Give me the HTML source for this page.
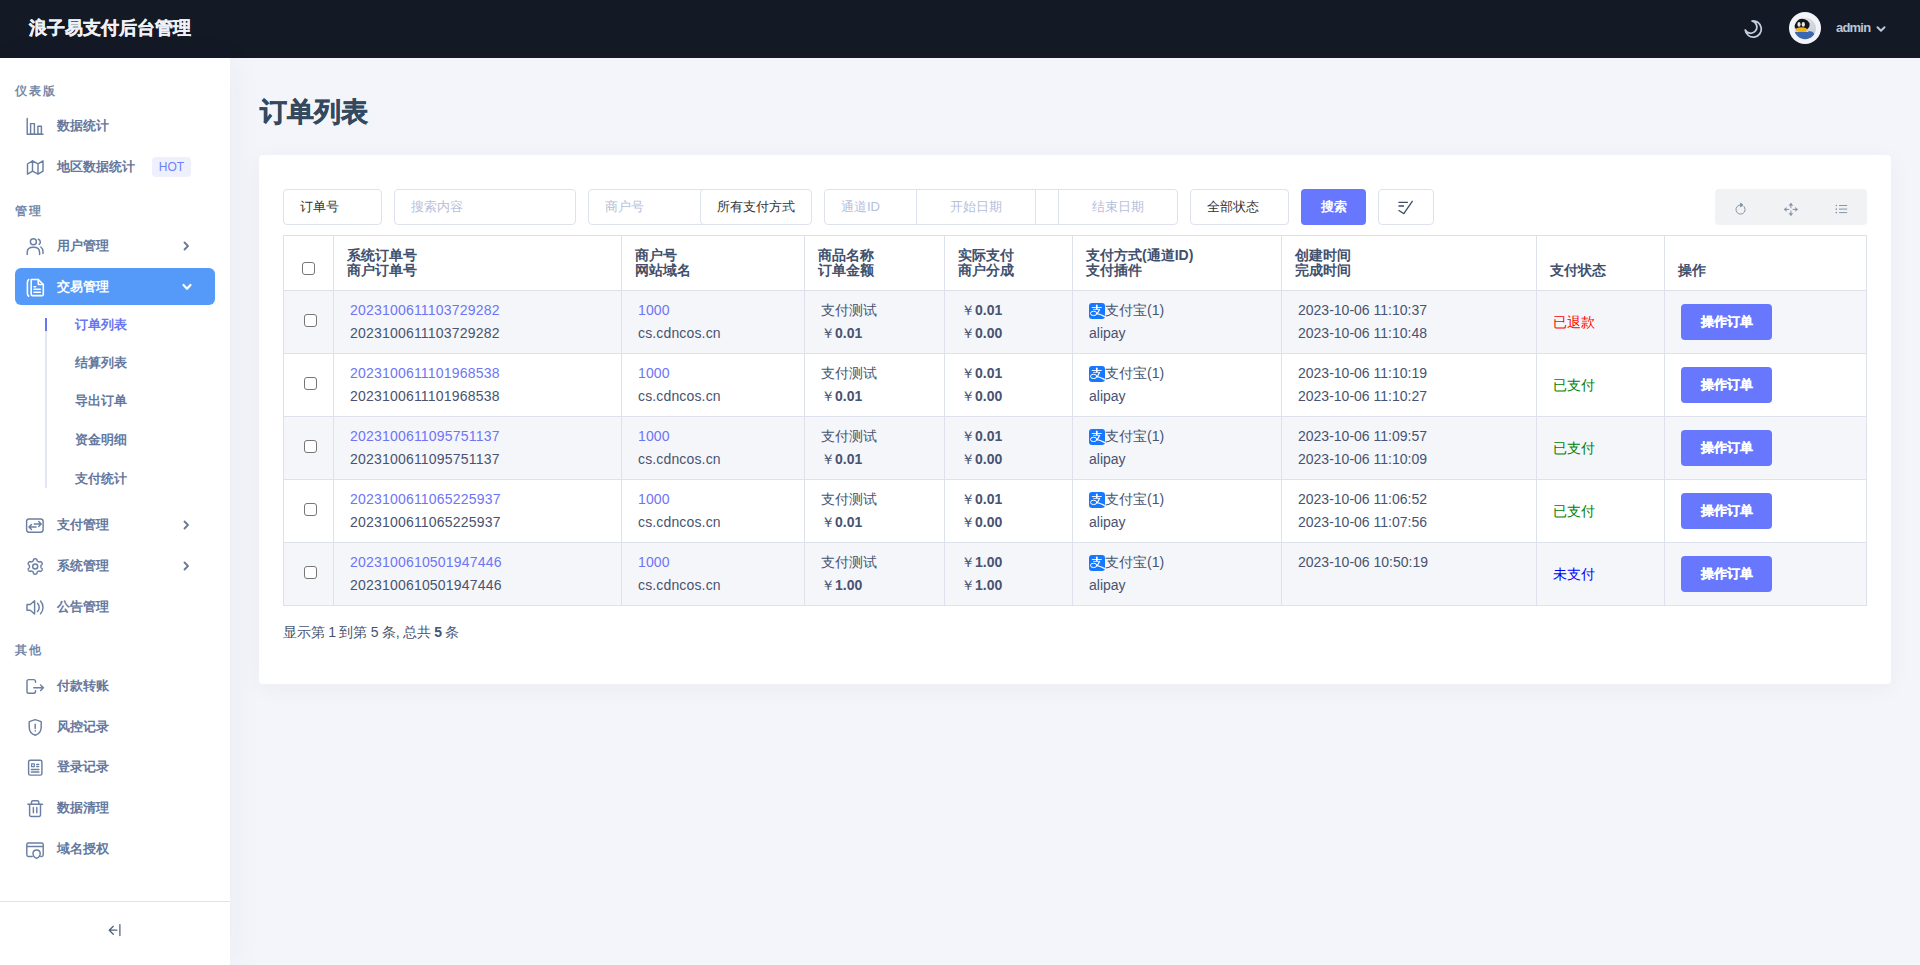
<!DOCTYPE html>
<html><head><meta charset="utf-8">
<style>
*{box-sizing:border-box;margin:0;padding:0}
html,body{width:1920px;height:965px;overflow:hidden;background:#f4f5fa;font-family:"Liberation Sans",sans-serif;}
#hdr{position:absolute;left:0;top:0;width:1920px;height:58px;background:#131925}
#hdr .title{position:absolute;left:29px;top:16px;font-size:18px;font-weight:bold;color:#eef1f7;line-height:24px;white-space:nowrap;-webkit-text-stroke:0.35px #eef1f7}
#side{position:absolute;left:0;top:58px;width:230px;height:907px;background:#fff;box-shadow:4px 0 30px rgba(30,40,90,0.045)}
.sec{position:absolute;left:15px;font-size:12px;font-weight:bold;color:#7488a8;letter-spacing:2px;line-height:14px;height:14px;white-space:nowrap}
.mi{position:absolute;left:15px;width:200px;height:36px;color:#64789e;font-size:13px;font-weight:bold;line-height:36px;white-space:nowrap}
.mi .tx{position:absolute;left:42px;top:1px}
.mi svg.ic{position:absolute;left:10px;top:9px;width:18px;height:18px}
.mi svg.chev{position:absolute;left:166px;top:14px;width:10px;height:10px}
.mi.act{background:#569af9;color:#fff;border-radius:6px;height:37px}
.hot{position:absolute;left:137px;top:9px;width:39px;height:20px;background:#eef0fd;color:#6f7ffb;border-radius:4px;font-size:12px;font-weight:normal;line-height:21px;text-align:center}
.sub{position:absolute;left:75px;font-size:13px;font-weight:bold;color:#64789e;line-height:16px;height:16px;white-space:nowrap}
.sub.on{color:#6777ef}
#ptitle{position:absolute;left:260px;top:94px;font-size:27px;font-weight:bold;color:#34495e;line-height:36px;white-space:nowrap;-webkit-text-stroke:0.5px #34495e}
#card{position:absolute;left:259px;top:155px;width:1632px;height:529px;background:#fff;border-radius:4px;box-shadow:0 4px 24px rgba(30,40,90,0.045)}
.inp{position:absolute;top:189px;height:36px;border:1px solid #dde2ee;border-radius:4px;background:#fff;font-size:13px;line-height:34px;padding-left:16px;color:#333;white-space:nowrap}
.ph{color:#b6c0da}
table.t{position:absolute;left:283px;top:235px;border-collapse:collapse;table-layout:fixed;font-size:14px}
table.t td,table.t th{border:1px solid #dde1ec;padding:0 0 0 13px;text-align:left;white-space:nowrap}
table.t th{height:55px;font-size:14px;font-weight:bold;color:#41506c;line-height:15px;vertical-align:bottom;padding-bottom:12px}
table.t td{height:63px;color:#475370;line-height:23px;vertical-align:middle;padding-left:16px}
table.t tr.odd td{background:#f5f6fa}
table.t td.c0{padding:0;text-align:center;vertical-align:middle}
table.t th.c0{padding:0 0 15px 0;text-align:center;vertical-align:bottom;line-height:13px}
.lk{color:#6d75f5}
b.m{font-weight:bold}
.btn{display:inline-block;width:91px;height:36px;background:#6777fe;color:#fff;border-radius:4px;font-size:13px;font-weight:bold;text-align:center;line-height:36px;-webkit-text-stroke:0.25px #fff}
.cb{display:inline-block;width:13px;height:13px;border:1px solid #767676;border-radius:3px;background:#fff;vertical-align:middle}
td.c0 .cb{position:relative;left:2px;top:-2px}
.ali{display:inline-block;width:16px;height:16px;background:#1677ff;border-radius:3px;vertical-align:-4px;position:relative;overflow:hidden}
</style></head><body>
<div id="hdr"><div class="title">浪子易支付后台管理</div></div>
<div id="side"></div>

<div class="sec" style="top:84px">仪表版</div>
<div class="sec" style="top:204px">管理</div>
<div class="sec" style="top:643px">其他</div>
<div class="mi" style="top:107px"><span class="tx">数据统计</span></div>
<div class="mi" style="top:148px"><span class="tx">地区数据统计</span><div class="hot">HOT</div></div>
<div class="mi" style="top:227px"><span class="tx">用户管理</span><svg class="chev" viewBox="0 0 10 10" fill="none" stroke="#6a7890" stroke-width="1.8" stroke-linecap="round" stroke-linejoin="round"><path d="M3.5 1.5L7 5 3.5 8.5"/></svg></div>
<div class="mi act" style="top:268px"><span class="tx">交易管理</span><svg class="chev" style="left:166px;top:13px;width:12px;height:12px" viewBox="0 0 12 12" fill="none" stroke="#fff" stroke-width="2.2" stroke-linecap="round" stroke-linejoin="round"><path d="M2.5 4L6 7.8 9.5 4"/></svg></div>
<div class="mi" style="top:506px"><span class="tx">支付管理</span><svg class="chev" viewBox="0 0 10 10" fill="none" stroke="#6a7890" stroke-width="1.8" stroke-linecap="round" stroke-linejoin="round"><path d="M3.5 1.5L7 5 3.5 8.5"/></svg></div>
<div class="mi" style="top:547px"><span class="tx">系统管理</span><svg class="chev" viewBox="0 0 10 10" fill="none" stroke="#6a7890" stroke-width="1.8" stroke-linecap="round" stroke-linejoin="round"><path d="M3.5 1.5L7 5 3.5 8.5"/></svg></div>
<div class="mi" style="top:588px"><span class="tx">公告管理</span></div>
<div class="mi" style="top:667px"><span class="tx">付款转账</span></div>
<div class="mi" style="top:708px"><span class="tx">风控记录</span></div>
<div class="mi" style="top:748px"><span class="tx">登录记录</span></div>
<div class="mi" style="top:789px"><span class="tx">数据清理</span></div>
<div class="mi" style="top:830px"><span class="tx">域名授权</span></div>
<svg style="position:absolute;left:0;top:0" width="230" height="965" viewBox="0 0 230 965" fill="none" stroke="#6b7fa2" stroke-width="1.45" stroke-linecap="round" stroke-linejoin="round">
<path d="M27.2 118.5V134.3H43"/><rect x="30.6" y="123.6" width="3.8" height="10.7"/><rect x="37.9" y="126.2" width="3.5" height="8.1"/>
<path d="M27.5 164L32.5 160.8L38 163.8L43 160.8V171.2L38 174.2L32.5 171.2L27.5 174.2Z M32.5 160.8V171.2 M38 163.8V174.2"/>
<circle cx="33.4" cy="241.8" r="3"/><path d="M27.2 254.5V252.5C27.2 249.3 29.6 247.3 33.4 247.3C37.2 247.3 39.6 249.3 39.6 252.5V254.5"/><path d="M38.3 239.2A3 3 0 0 1 39.2 244.4M40.8 247C42.3 248 43 249.8 43 252V253.5"/>
<g stroke="#fff" stroke-width="1.6"><path d="M28.6 279.6C27.7 280.4 27.4 281.3 27.4 282.5V293.2C27.4 294.4 27.7 295.3 28.6 296.1"/><path d="M31.2 279.5H38.3L43.3 284.5V294.6A1 1 0 0 1 42.3 295.6H32.2A1 1 0 0 1 31.2 294.6Z"/><path d="M38.3 279.5V284.5H43.3"/><path d="M34 286.7H35.6M34 289.3H40.3M34 292.3H40.3"/></g>
<rect x="26.6" y="518.9" width="16.5" height="13.3" rx="2.4"/><path d="M34.3 524H41.2M38.7 521.5L41.2 524L38.7 526.5M36.1 527H29M31.5 524.5L29 527L31.5 529.5"/>
<path d="M40.90 566.50 L40.90 566.65 L40.91 566.80 L40.93 566.95 L40.96 567.11 L40.99 567.26 L41.04 567.42 L41.10 567.59 L41.18 567.77 L41.29 567.96 L41.67 568.23 L42.04 568.53 L42.13 568.75 L42.18 568.97 L42.19 569.18 L42.18 569.39 L42.15 569.59 L42.10 569.79 L42.04 569.99 L41.96 570.17 L41.87 570.35 L41.76 570.52 L41.64 570.68 L41.50 570.83 L41.36 570.97 L41.19 571.10 L41.02 571.21 L40.83 571.31 L40.62 571.38 L40.37 571.41 L39.94 571.24 L39.51 571.05 L39.29 571.04 L39.10 571.06 L38.92 571.10 L38.76 571.14 L38.60 571.18 L38.46 571.24 L38.32 571.30 L38.18 571.36 L38.05 571.44 L37.92 571.51 L37.80 571.60 L37.68 571.69 L37.56 571.79 L37.44 571.90 L37.32 572.02 L37.20 572.15 L37.09 572.31 L36.98 572.51 L36.93 572.97 L36.87 573.44 L36.72 573.63 L36.55 573.78 L36.37 573.90 L36.19 573.99 L36.00 574.07 L35.80 574.13 L35.60 574.17 L35.40 574.19 L35.20 574.20 L35.00 574.19 L34.80 574.17 L34.60 574.13 L34.40 574.07 L34.21 573.99 L34.03 573.90 L33.85 573.78 L33.68 573.63 L33.53 573.44 L33.47 572.97 L33.42 572.51 L33.31 572.31 L33.20 572.15 L33.08 572.02 L32.96 571.90 L32.84 571.79 L32.72 571.69 L32.60 571.60 L32.48 571.51 L32.35 571.44 L32.22 571.36 L32.08 571.30 L31.94 571.24 L31.80 571.18 L31.64 571.14 L31.48 571.10 L31.30 571.06 L31.11 571.04 L30.89 571.05 L30.46 571.24 L30.03 571.41 L29.78 571.38 L29.57 571.31 L29.38 571.21 L29.21 571.10 L29.04 570.97 L28.90 570.83 L28.76 570.68 L28.64 570.52 L28.53 570.35 L28.44 570.17 L28.36 569.99 L28.30 569.79 L28.25 569.59 L28.22 569.39 L28.21 569.18 L28.22 568.97 L28.27 568.75 L28.36 568.53 L28.73 568.23 L29.11 567.96 L29.22 567.77 L29.30 567.59 L29.36 567.42 L29.41 567.26 L29.44 567.11 L29.47 566.95 L29.49 566.80 L29.50 566.65 L29.50 566.50 L29.50 566.35 L29.49 566.20 L29.47 566.05 L29.44 565.89 L29.41 565.74 L29.36 565.58 L29.30 565.41 L29.22 565.23 L29.11 565.04 L28.73 564.77 L28.36 564.47 L28.27 564.25 L28.22 564.03 L28.21 563.82 L28.22 563.61 L28.25 563.41 L28.30 563.21 L28.36 563.01 L28.44 562.83 L28.53 562.65 L28.64 562.48 L28.76 562.32 L28.90 562.17 L29.04 562.03 L29.21 561.90 L29.38 561.79 L29.57 561.69 L29.78 561.62 L30.03 561.59 L30.46 561.76 L30.89 561.95 L31.11 561.96 L31.30 561.94 L31.48 561.90 L31.64 561.86 L31.80 561.82 L31.94 561.76 L32.08 561.70 L32.22 561.64 L32.35 561.56 L32.48 561.49 L32.60 561.40 L32.72 561.31 L32.84 561.21 L32.96 561.10 L33.08 560.98 L33.20 560.85 L33.31 560.69 L33.42 560.49 L33.47 560.03 L33.53 559.56 L33.68 559.37 L33.85 559.22 L34.03 559.10 L34.21 559.01 L34.40 558.93 L34.60 558.87 L34.80 558.83 L35.00 558.81 L35.20 558.80 L35.40 558.81 L35.60 558.83 L35.80 558.87 L36.00 558.93 L36.19 559.01 L36.37 559.10 L36.55 559.22 L36.72 559.37 L36.87 559.56 L36.93 560.03 L36.98 560.49 L37.09 560.69 L37.20 560.85 L37.32 560.98 L37.44 561.10 L37.56 561.21 L37.68 561.31 L37.80 561.40 L37.92 561.49 L38.05 561.56 L38.18 561.64 L38.32 561.70 L38.46 561.76 L38.60 561.82 L38.76 561.86 L38.92 561.90 L39.10 561.94 L39.29 561.96 L39.51 561.95 L39.94 561.76 L40.37 561.59 L40.62 561.62 L40.83 561.69 L41.02 561.79 L41.19 561.90 L41.36 562.03 L41.50 562.17 L41.64 562.32 L41.76 562.48 L41.87 562.65 L41.96 562.83 L42.04 563.01 L42.10 563.21 L42.15 563.41 L42.18 563.61 L42.19 563.82 L42.18 564.03 L42.13 564.25 L42.04 564.47 L41.67 564.77 L41.29 565.04 L41.18 565.23 L41.10 565.41 L41.04 565.58 L40.99 565.74 L40.96 565.89 L40.93 566.05 L40.91 566.20 L40.90 566.35 L40.90 566.50Z"/><circle cx="35.2" cy="566.5" r="2.5"/>
<path d="M27 604.5H30.2L34.6 600.8V614L30.2 610.3H27Z"/><path d="M37.5 603.3C38.6 604.5 39.2 605.8 39.2 607.4C39.2 609 38.6 610.3 37.5 611.5M40.5 601C42.2 602.8 43 605 43 607.4C43 609.8 42.2 612 40.5 613.8"/>
<path d="M35.5 682.2V681.4A1.8 1.8 0 0 0 33.7 679.6H28.8A1.8 1.8 0 0 0 27 681.4V691.4A1.8 1.8 0 0 0 28.8 693.2H33.7A1.8 1.8 0 0 0 35.5 691.4V690.6"/><path d="M33.8 687.8H43.4M40.6 685L43.4 687.8L40.6 690.6"/>
<path d="M35.2 719.6L41.2 721.6V727.2C41.2 731 38.6 734 35.2 735.2C31.8 734 29.2 731 29.2 727.2V721.6Z"/><path d="M35.2 724.2V728.6M35.2 730.8V730.9"/>
<rect x="28.6" y="760.3" width="13.3" height="14.8" rx="1.6"/><rect x="31.6" y="763.8" width="2.7" height="2.9" stroke-width="1.2"/><path d="M36.6 764.4H38.7M36.6 766.6H38.7M31.4 769.5H38.9M31.4 772H38.9"/>
<path d="M27.9 804.3H42.5M31.5 804.3V802.2A1.5 1.5 0 0 1 33 800.7H37.3A1.5 1.5 0 0 1 38.8 802.2V804.3M29.6 804.3V815A1.5 1.5 0 0 0 31.1 816.5H39A1.5 1.5 0 0 0 40.5 815V804.3M33.4 807.5V812.8M36.8 807.5V812.8"/>
<path d="M32.2 856.4H28.4A1.6 1.6 0 0 1 26.8 854.8V844.6A1.6 1.6 0 0 1 28.4 843H41.6A1.6 1.6 0 0 1 43.2 844.6V854.8A1.6 1.6 0 0 1 41.6 856.4H40.8M26.8 846.4H43.2"/><path d="M36.6 850A3.6 3.6 0 0 1 40.2 853.4C40.2 855.6 38.6 857.4 36.6 858.4C34.6 857.4 33 855.6 33 853.4A3.6 3.6 0 0 1 36.6 850Z"/>
</svg>
<div style="position:absolute;left:45px;top:318px;width:2px;height:170px;background:#e3e7f3"></div>
<div style="position:absolute;left:45px;top:318px;width:2px;height:13px;background:#6777ef"></div>
<div class="sub on" style="top:316.5px">订单列表</div>
<div class="sub" style="top:354.5px">结算列表</div>
<div class="sub" style="top:393px">导出订单</div>
<div class="sub" style="top:432px">资金明细</div>
<div class="sub" style="top:471px">支付统计</div>
<div style="position:absolute;left:0;top:901px;width:230px;height:1px;background:#dfe2f0"></div>
<svg style="position:absolute;left:107px;top:923px" width="15" height="14" viewBox="0 0 15 14" fill="none" stroke="#4f5f82" stroke-width="1.25" stroke-linecap="round" stroke-linejoin="round"><path d="M2.2 7.2H9.8M6.3 3.3L2.2 7.2L6.3 11.3M12.9 1.5V12.6"/></svg>
<svg style="position:absolute;left:1736px;top:12px" width="34" height="34" viewBox="1736 12 34 34" fill="none" stroke="#c3cfe0" stroke-width="1.75" stroke-linecap="round" stroke-linejoin="round"><path d="M1752 21A8.1 8.1 0 1 1 1745.2 30A6.2 6.2 0 1 0 1752 21Z"/></svg>
<svg style="position:absolute;left:1789px;top:12px" width="32" height="32" viewBox="0 0 32 32">
<defs><linearGradient id="ag" x1="0" y1="0" x2="1" y2="1"><stop offset="0" stop-color="#f2f4f7"/><stop offset="1" stop-color="#b9c1cc"/></linearGradient><clipPath id="ac"><circle cx="16.1" cy="16.4" r="10.8"/></clipPath></defs>
<circle cx="16" cy="16" r="16" fill="#f3f4f9"/>
<g clip-path="url(#ac)"><rect x="0" y="0" width="32" height="32" fill="url(#ag)"/>
<path d="M4 21C8 18.6 17 18.2 23.5 19.8L27 24L25 30H4Z" fill="#3b66b0"/><path d="M7.5 19.6C10 19 15 19 19.5 19.6" stroke="#dfe8f5" stroke-width="0.9" fill="none"/>
<ellipse cx="12.8" cy="12.9" rx="7.8" ry="6.2" fill="#15161c"/>
<ellipse cx="10" cy="12.4" rx="1.6" ry="2.3" fill="#e8e8e8"/><ellipse cx="14.3" cy="12.4" rx="1.6" ry="2.3" fill="#e8e8e8"/>
<ellipse cx="12.4" cy="17.4" rx="5.9" ry="2.1" fill="#f2b414"/></g>
</svg>
<div style="position:absolute;left:1836px;top:19px;font-size:13px;font-weight:bold;color:#b9c6d8;line-height:17px;letter-spacing:-0.8px">admin</div>
<svg style="position:absolute;left:1876px;top:25px" width="10" height="8" viewBox="0 0 10 8" fill="none" stroke="#b9c6d8" stroke-width="2" stroke-linecap="round" stroke-linejoin="round"><path d="M1.5 2.2l3.5 3.5L8.5 2.2"/></svg>
<div id="ptitle">订单列表</div>
<div id="card"></div>
<div class="inp" style="left:283px;width:99px;">订单号</div>
<div class="inp ph" style="left:394px;width:182px;">搜索内容</div>
<div class="inp ph" style="left:588px;width:124px;border-radius:4px 0 0 4px;">商户号</div>
<div class="inp" style="left:700px;width:112px;">所有支付方式</div>
<div class="inp ph" style="left:824px;width:212px;border-radius:4px 0 0 4px;">通道ID</div>
<div class="inp ph" style="left:916px;width:120px;padding:0;text-align:center;border-radius:0;border-left:1px solid #dde2ee">开始日期</div>
<div class="inp" style="left:1035px;width:24px;border-radius:0;padding:0"></div>
<div class="inp ph" style="left:1058px;width:120px;padding:0;text-align:center;border-radius:0 4px 4px 0">结束日期</div>
<div class="inp" style="left:1190px;width:99px;">全部状态</div>
<div style="position:absolute;left:1301px;top:189px;width:65px;height:36px;background:#6777fe;border-radius:4px;color:#fff;font-size:13px;font-weight:bold;line-height:36px;text-align:center">搜索</div>
<div class="inp" style="left:1378px;width:56px;padding:0"><svg style="position:absolute;left:18px;top:9px" width="18" height="17" viewBox="0 0 18 17" fill="none" stroke="#3f4c66" stroke-width="1.3" stroke-linecap="butt" stroke-linejoin="miter"><path d="M1.5 3.4H10.9M1.5 7H7M1.5 11.3L6.8 14.6L15.6 1.9"/></svg></div>
<div style="position:absolute;left:1715px;top:189px;width:152px;height:36px;background:#f1f2f4;border-radius:4px"></div>
<svg style="position:absolute;left:1715px;top:189px" width="152" height="36" viewBox="1715 189 152 36" fill="none" stroke="#8190a6" stroke-width="0.95" stroke-linecap="round" stroke-linejoin="round">
<path d="M1743.9 206.3A4.6 4.6 0 1 1 1740.8 204.9"/><path d="M1740.8 203.4L1743 205L1740.8 206.6Z" fill="#8190a6"/>
<path d="M1790.9 203.6V207.8M1790.9 211V215.2M1784.6 209.4H1788.8M1793 209.4H1797.2"/>
<path d="M1789.2 205.2L1790.9 203.3L1792.6 205.2Z M1789.2 213.6L1790.9 215.5L1792.6 213.6Z M1786.1 207.7L1784.2 209.4L1786.1 211.1Z M1795.7 207.7L1797.6 209.4L1795.7 211.1Z" fill="#8190a6" stroke-width="0.5"/>
<path d="M1836.3 205.5V205.6M1836.3 209.1V209.2M1836.3 212.6V212.7" stroke-width="1.5"/><path d="M1839.4 205.5H1846.8M1839.4 209.1H1846.8M1839.4 212.6H1846.8"/>
</svg>
<table class="t"><colgroup><col style="width:50px"><col style="width:288px"><col style="width:183px"><col style="width:140px"><col style="width:128px"><col style="width:209px"><col style="width:255px"><col style="width:128px"><col style="width:202px"></colgroup>
<tr><th class="c0"><span class="cb"></span></th><th>系统订单号<br>商户订单号</th><th>商户号<br>网站域名</th><th>商品名称<br>订单金额</th><th>实际支付<br>商户分成</th><th>支付方式(通道ID)<br>支付插件</th><th>创建时间<br>完成时间</th><th>支付状态</th><th>操作</th></tr>
<tr class="odd"><td class="c0"><span class="cb"></span></td><td style="letter-spacing:0.2px"><span class="lk">2023100611103729282</span><br>2023100611103729282</td><td style="letter-spacing:0.15px"><span class="lk">1000</span><br>cs.cdncos.cn</td><td>支付测试<br>￥<b class="m">0.01</b></td><td>￥<b class="m">0.01</b><br>￥<b class="m">0.00</b></td><td><span class="ali"><svg width="16" height="16" viewBox="0 0 16 16" style="position:absolute;left:0;top:0" fill="none" stroke="#fff" stroke-linecap="round"><path d="M3.2 4.5H12.3" stroke-width="0.9"/><path d="M7.8 2.3V5.6" stroke-width="1.6"/><path d="M4.6 6.4H9.8" stroke-width="0.8"/><path d="M10.6 6.4L8.6 10" stroke-width="1.2"/><ellipse cx="4.7" cy="10.4" rx="3.2" ry="2.2" stroke-width="1"/><path d="M7.6 10.6C10 10.6 13 12.2 16 13.6" stroke-width="1.3"/></svg></span>支付宝(1)<br>alipay</td><td>2023-10-06 11:10:37<br>2023-10-06 11:10:48</td><td style="color:#ff0000">已退款</td><td><span class="btn">操作订单</span></td></tr>
<tr class=""><td class="c0"><span class="cb"></span></td><td style="letter-spacing:0.2px"><span class="lk">2023100611101968538</span><br>2023100611101968538</td><td style="letter-spacing:0.15px"><span class="lk">1000</span><br>cs.cdncos.cn</td><td>支付测试<br>￥<b class="m">0.01</b></td><td>￥<b class="m">0.01</b><br>￥<b class="m">0.00</b></td><td><span class="ali"><svg width="16" height="16" viewBox="0 0 16 16" style="position:absolute;left:0;top:0" fill="none" stroke="#fff" stroke-linecap="round"><path d="M3.2 4.5H12.3" stroke-width="0.9"/><path d="M7.8 2.3V5.6" stroke-width="1.6"/><path d="M4.6 6.4H9.8" stroke-width="0.8"/><path d="M10.6 6.4L8.6 10" stroke-width="1.2"/><ellipse cx="4.7" cy="10.4" rx="3.2" ry="2.2" stroke-width="1"/><path d="M7.6 10.6C10 10.6 13 12.2 16 13.6" stroke-width="1.3"/></svg></span>支付宝(1)<br>alipay</td><td>2023-10-06 11:10:19<br>2023-10-06 11:10:27</td><td style="color:#008000">已支付</td><td><span class="btn">操作订单</span></td></tr>
<tr class="odd"><td class="c0"><span class="cb"></span></td><td style="letter-spacing:0.2px"><span class="lk">2023100611095751137</span><br>2023100611095751137</td><td style="letter-spacing:0.15px"><span class="lk">1000</span><br>cs.cdncos.cn</td><td>支付测试<br>￥<b class="m">0.01</b></td><td>￥<b class="m">0.01</b><br>￥<b class="m">0.00</b></td><td><span class="ali"><svg width="16" height="16" viewBox="0 0 16 16" style="position:absolute;left:0;top:0" fill="none" stroke="#fff" stroke-linecap="round"><path d="M3.2 4.5H12.3" stroke-width="0.9"/><path d="M7.8 2.3V5.6" stroke-width="1.6"/><path d="M4.6 6.4H9.8" stroke-width="0.8"/><path d="M10.6 6.4L8.6 10" stroke-width="1.2"/><ellipse cx="4.7" cy="10.4" rx="3.2" ry="2.2" stroke-width="1"/><path d="M7.6 10.6C10 10.6 13 12.2 16 13.6" stroke-width="1.3"/></svg></span>支付宝(1)<br>alipay</td><td>2023-10-06 11:09:57<br>2023-10-06 11:10:09</td><td style="color:#008000">已支付</td><td><span class="btn">操作订单</span></td></tr>
<tr class=""><td class="c0"><span class="cb"></span></td><td style="letter-spacing:0.2px"><span class="lk">2023100611065225937</span><br>2023100611065225937</td><td style="letter-spacing:0.15px"><span class="lk">1000</span><br>cs.cdncos.cn</td><td>支付测试<br>￥<b class="m">0.01</b></td><td>￥<b class="m">0.01</b><br>￥<b class="m">0.00</b></td><td><span class="ali"><svg width="16" height="16" viewBox="0 0 16 16" style="position:absolute;left:0;top:0" fill="none" stroke="#fff" stroke-linecap="round"><path d="M3.2 4.5H12.3" stroke-width="0.9"/><path d="M7.8 2.3V5.6" stroke-width="1.6"/><path d="M4.6 6.4H9.8" stroke-width="0.8"/><path d="M10.6 6.4L8.6 10" stroke-width="1.2"/><ellipse cx="4.7" cy="10.4" rx="3.2" ry="2.2" stroke-width="1"/><path d="M7.6 10.6C10 10.6 13 12.2 16 13.6" stroke-width="1.3"/></svg></span>支付宝(1)<br>alipay</td><td>2023-10-06 11:06:52<br>2023-10-06 11:07:56</td><td style="color:#008000">已支付</td><td><span class="btn">操作订单</span></td></tr>
<tr class="odd"><td class="c0"><span class="cb"></span></td><td style="letter-spacing:0.2px"><span class="lk">2023100610501947446</span><br>2023100610501947446</td><td style="letter-spacing:0.15px"><span class="lk">1000</span><br>cs.cdncos.cn</td><td>支付测试<br>￥<b class="m">1.00</b></td><td>￥<b class="m">1.00</b><br>￥<b class="m">1.00</b></td><td><span class="ali"><svg width="16" height="16" viewBox="0 0 16 16" style="position:absolute;left:0;top:0" fill="none" stroke="#fff" stroke-linecap="round"><path d="M3.2 4.5H12.3" stroke-width="0.9"/><path d="M7.8 2.3V5.6" stroke-width="1.6"/><path d="M4.6 6.4H9.8" stroke-width="0.8"/><path d="M10.6 6.4L8.6 10" stroke-width="1.2"/><ellipse cx="4.7" cy="10.4" rx="3.2" ry="2.2" stroke-width="1"/><path d="M7.6 10.6C10 10.6 13 12.2 16 13.6" stroke-width="1.3"/></svg></span>支付宝(1)<br>alipay</td><td>2023-10-06 10:50:19<br>&nbsp;</td><td style="color:#0000ff">未支付</td><td><span class="btn">操作订单</span></td></tr>
</table>
<div style="position:absolute;left:283px;top:623px;font-size:14px;color:#475370;line-height:18px;white-space:nowrap;word-spacing:-0.6px">显示第 1 到第 5 条, 总共 <b>5</b> 条</div>
</body></html>
